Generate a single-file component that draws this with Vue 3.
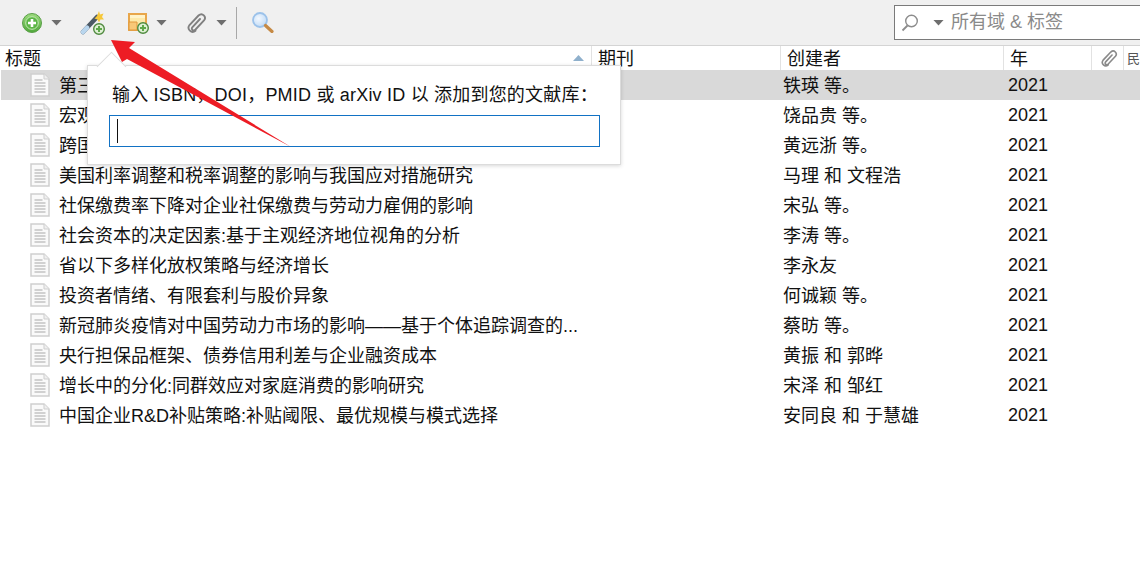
<script setup>
const rows = [
  { title: '第三', creator: '铁瑛 等。', selected: true },
  { title: '宏观', creator: '饶品贵 等。' },
  { title: '跨国', creator: '黄远浙 等。' },
  { title: '美国利率调整和税率调整的影响与我国应对措施研究', creator: '马理 和 文程浩' },
  { title: '社保缴费率下降对企业社保缴费与劳动力雇佣的影响', creator: '宋弘 等。' },
  { title: '社会资本的决定因素:基于主观经济地位视角的分析', creator: '李涛 等。' },
  { title: '省以下多样化放权策略与经济增长', creator: '李永友' },
  { title: '投资者情绪、有限套利与股价异象', creator: '何诚颖 等。' },
  { title: '新冠肺炎疫情对中国劳动力市场的影响——基于个体追踪调查的...', creator: '蔡昉 等。' },
  { title: '央行担保品框架、债券信用利差与企业融资成本', creator: '黄振 和 郭晔' },
  { title: '增长中的分化:同群效应对家庭消费的影响研究', creator: '宋泽 和 邹红' },
  { title: '中国企业R&D补贴策略:补贴阈限、最优规模与模式选择', creator: '安同良 和 于慧雄' },
]
</script>

<template>
  <div class="app">
    <div class="toolbar">
      <svg class="ic add" viewBox="0 0 20 20" width="20" height="20">
        <defs>
          <linearGradient id="g1" x1="0" y1="0" x2="0" y2="1"><stop offset="0" stop-color="#9ddc7e"/><stop offset="1" stop-color="#4fa83a"/></linearGradient>
        </defs>
        <circle cx="10" cy="10" r="9.5" fill="url(#g1)" stroke="#5a9e48"/>
        <circle cx="10" cy="10" r="6.3" fill="#5cb646" stroke="#c3e9b3"/>
        <path d="M10 6v8M6 10h8" stroke="#fff" stroke-width="2.6"/>
      </svg>
      <span class="caret c1"></span>
      <svg class="ic wand" viewBox="0 0 26 24" width="26" height="24">
        <path d="M4 21 L18 6" stroke="#4c5965" stroke-width="4.500" stroke-linecap="round"/>
        <path d="M4 21 L8 16.700" stroke="#b9d6ee" stroke-width="4.500" stroke-linecap="round"/>
        <path d="M20 0l1 3.500 3.500-1-1.500 3.500 2 2.500-3.500 0-1.500 3-1.500-3-3-1 2.500-2.500z" fill="#f6c83a"/>
        <circle cx="20" cy="18" r="5.300" fill="#dff0d4" stroke="#4f8a3f" stroke-width="1.400"/>
        <path d="M20 15v6M17 18h6" stroke="#5ea84a" stroke-width="2"/>
      </svg>
      <svg class="ic note" viewBox="0 0 22 22" width="22" height="22">
        <rect x="2" y="2" width="17" height="16" fill="#fde9a8" stroke="#e8a64a" stroke-width="2"/>
        <rect x="3" y="3" width="15" height="3" fill="#fff3c8"/>
        <path d="M2 10h8v8H2z" fill="#f8c877" stroke="#e0983d"/>
        <circle cx="16" cy="16" r="5.300" fill="#dff0d4" stroke="#4f8a3f" stroke-width="1.400"/>
        <path d="M16 13v6M13 16h6" stroke="#5ea84a" stroke-width="2"/>
      </svg>
      <span class="caret c2"></span>
      <svg class="ic clip" viewBox="0 0 20 21" width="20" height="21">
        <path d="M13 7 L5.500 15 C3.500 17.500 6.500 19.500 8.500 17.500 L17 8.500 C19.800 5 15.500 0 11.500 3.500 L2.500 13 C-0.500 17 4.500 22 8.500 18.700" fill="none" stroke="#808080" stroke-width="1.900" stroke-linecap="round"/>
      </svg>
      <span class="caret c3"></span>
      <span class="divider"></span>
      <svg class="ic lens" viewBox="0 0 22 21" width="22" height="21">
        <defs>
          <radialGradient id="g2" cx="0.4" cy="0.4" r="0.7"><stop offset="0" stop-color="#f2f8ff"/><stop offset="1" stop-color="#bcd8f5"/></radialGradient>
        </defs>
        <circle cx="8" cy="8" r="7" fill="url(#g2)" stroke="#9cc2ea" stroke-width="1.800"/>
        <path d="M13.500 13.500l6.500 6" stroke="#c68a45" stroke-width="3.200" stroke-linecap="round"/>
      </svg>
      <div class="search">
        <svg class="search-ic" viewBox="0 0 18 18" width="18" height="18">
          <circle cx="10.500" cy="7" r="5.800" fill="none" stroke="#8c8c8c" stroke-width="1.400"/>
          <path d="M6.500 11.500L1.500 16.500" stroke="#8c8c8c" stroke-width="1.800"/>
        </svg>
        <span class="caret c4"></span>
        <span class="placeholder">所有域 &amp; 标签</span>
      </div>
    </div>

    <div class="head">
      <div class="hcell">标题<span class="sort"></span></div>
      <div class="hcell">期刊</div>
      <div class="hcell">创建者</div>
      <div class="hcell">年</div>
      <div class="hcell icon-cell">
        <svg viewBox="0 0 20 21" width="17" height="18">
          <path d="M13 7 L5.500 15 C3.500 17.500 6.500 19.500 8.500 17.500 L17 8.500 C19.800 5 15.500 0 11.500 3.500 L2.500 13 C-0.500 17 4.500 22 8.500 18.700" fill="none" stroke="#8a8a8a" stroke-width="1.900" stroke-linecap="round"/>
        </svg>
      </div>
      <div class="hcell last">民</div>
    </div>

    <div class="list">
      <div v-for="r in rows" :key="r.title" class="row" :class="{ selected: r.selected }">
        <div class="title">
          <svg class="doc" viewBox="0 0 20 24" width="20" height="24">
            <path d="M1 1h13l5 5v17H1z" fill="#fafafa" stroke="#cfcfcf" stroke-width="1.500"/>
            <path d="M14 1v5h5" fill="#efefef" stroke="#cfcfcf"/>
            <path d="M4.500 7h8M4.500 10h11M4.500 13h11M4.500 16h11M4.500 19h11" stroke="#a8a8a8" stroke-width="1.200"/>
          </svg>
          <span class="ttext">{{ r.title }}</span>
        </div>
        <div class="journal"></div>
        <div class="creator">{{ r.creator }}</div>
        <div class="year">2021</div>
      </div>
    </div>

    <div class="popup">
      <span class="notch"></span>
      <div class="prompt">输入 ISBN，DOI，PMID 或 arXiv ID 以 添加到您的文献库：</div>
      <div class="input"><span class="cursor"></span></div>
    </div>

    <svg class="arrow" viewBox="0 0 1140 582" width="1140" height="582">
      <polygon points="111,40 135,42 129,48 291,147 127,59 122,62" fill="#ed1c24"/>
    </svg>
  </div>
</template>

<style>
html, body { margin: 0; background: #fff; }
</style>

<style scoped>
.app {
  position: relative;
  width: 1140px;
  height: 582px;
  overflow: hidden;
  background: #fff;
  color: #111;
  font-family: "Liberation Sans", "Noto Sans CJK SC", sans-serif;
  font-size: 18px;
}
.toolbar {
  height: 45px;
  background: #f0f0f0;
  border-bottom: 1px solid #d4d4d4;
  display: flex;
  align-items: center;
  padding-left: 22px;
}
.ic { flex: none; }
.caret {
  flex: none;
  width: 11px;
  height: 6px;
  background: #6e6e6e;
  clip-path: polygon(0 0, 100% 0, 50% 100%);
}
.c1 { margin-left: 9px; }
.wand { margin-left: 17px; }
.note { margin-left: 22px; }
.c2 { margin-left: 7px; }
.clip { margin-left: 20px; }
.c3 { margin-left: 9px; }
.divider {
  flex: none;
  width: 1px;
  height: 32px;
  background: #a8a8a8;
  margin-left: 9px;
}
.lens { margin-left: 15px; }
.search {
  flex: none;
  box-sizing: border-box;
  margin-left: 620px;
  width: 260px;
  height: 35px;
  background: #fff;
  border: 1px solid #7a7a7a;
  display: flex;
  align-items: center;
  padding-left: 6px;
}
.c4 { margin-left: 14px; }
.placeholder {
  margin-left: 7px;
  color: #8a8a8a;
  white-space: nowrap;
  line-height: 30px;
  padding-bottom: 1px;
}
.head {
  height: 24px;
  display: grid;
  grid-template-columns: 592px 189px 223px 88px 32px 16px;
}
.hcell {
  position: relative;
  box-sizing: border-box;
  padding: 1px 0 0 6px;
  line-height: 24px;
  border-right: 1px solid #e2e2e2;
  white-space: nowrap;
  overflow: hidden;
}
.hcell:first-child { padding-left: 5px; }
.icon-cell { display: flex; align-items: center; padding: 0 0 0 9px; }
.last { padding-left: 3px; border-right: 0; font-size: 13px; color: #555; }
.sort {
  position: absolute;
  right: 7px;
  top: 9px;
  width: 11px;
  height: 6px;
  background: #8fb0cc;
  clip-path: polygon(50% 0, 100% 100%, 0 100%);
}
.row {
  box-sizing: border-box;
  height: 30px;
  padding-bottom: 2px;
  margin-left: 1px;
  display: grid;
  grid-template-columns: 590px 192px 225px 1fr;
  align-items: center;
}
.row.selected { background: #d9d9d9; }
.title {
  display: flex;
  align-items: center;
  padding-left: 29px;
  white-space: nowrap;
}
.doc { flex: none; margin-right: 9px; position: relative; top: 1px; }
.year { padding-top: 2px; }
.popup {
  position: absolute;
  left: 87px;
  top: 65px;
  box-sizing: border-box;
  width: 534px;
  height: 100px;
  background: #fff;
  border: 1px solid #dcdcdc;
  box-shadow: 0 1px 4px rgba(0, 0, 0, 0.16);
  padding: 16px 21px 0;
}
.notch {
  position: absolute;
  left: 13px;
  top: -10px;
  width: 20px;
  height: 20px;
  background: #fff;
  border-left: 1px solid #dcdcdc;
  border-top: 1px solid #dcdcdc;
  transform: rotate(45deg);
}
.prompt {
  position: relative;
  padding-left: 3px;
  line-height: 26px;
  white-space: nowrap;
  letter-spacing: 0.2px;
}
.input {
  position: relative;
  box-sizing: border-box;
  width: 491px;
  height: 32px;
  margin-top: 7px;
  border: 1px solid #1272c4;
  display: flex;
  align-items: center;
  padding-left: 7px;
}
.cursor {
  width: 1px;
  height: 24px;
  background: #111;
}
.arrow {
  position: absolute;
  left: 0;
  top: 0;
  pointer-events: none;
}
</style>
